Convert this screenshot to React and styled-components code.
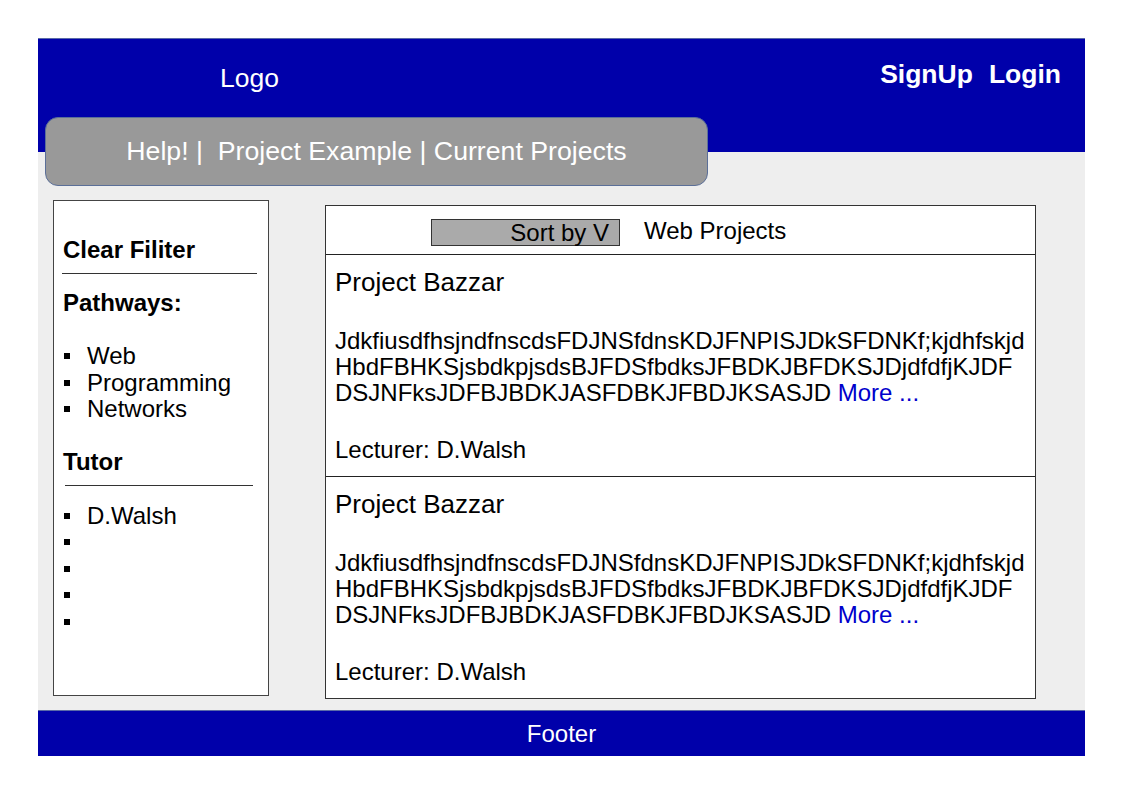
import React from "react";
import styled, { createGlobalStyle } from "styled-components";

const GlobalStyle = createGlobalStyle`
  html, body {
    margin: 0;
    padding: 0;
    background: #ffffff;
    font-family: "Liberation Sans", Arial, sans-serif;
    color: #000;
  }
  * { box-sizing: border-box; }
`;

const Frame = styled.div`
  width: 1047px;
  margin: 38px 0 0 38px;
  display: flex;
  flex-direction: column;
`;

const Header = styled.header`
  height: 114px;
  background: #0000aa;
  border-top: 1px solid #5a6aa8;
  display: flex;
  justify-content: space-between;
  align-items: flex-start;
  color: #fff;
`;

const Logo = styled.div`
  padding: 24px 0 0 182px;
  font-size: 26.5px;
  line-height: 30px;
`;

const AuthLinks = styled.nav`
  display: flex;
  gap: 16px;
  padding: 20px 24px 0 0;
  font-size: 26.5px;
  font-weight: bold;
  line-height: 30px;
`;

const AuthLink = styled.span``;

const Content = styled.main`
  height: 558px;
  background: #eeeeee;
  display: flex;
  flex-direction: column;
`;

const NavPill = styled.nav`
  margin: -35px 0 0 7px;
  width: 663px;
  height: 69px;
  background: #999999;
  border: 1px solid #5b6f98;
  border-radius: 13px;
  display: flex;
  align-items: center;
  justify-content: center;
  color: #fff;
  font-size: 26.7px;
  white-space: pre;
`;

const Columns = styled.div`
  display: flex;
  align-items: flex-start;
  padding-left: 15px;
  margin-top: 14px;
`;

const Sidebar = styled.aside`
  width: 216px;
  height: 496px;
  background: #fff;
  border: 1px solid #444;
  padding: 34px 0 0 9px;
`;

const SideHeading = styled.div`
  font-size: 24px;
  font-weight: bold;
  line-height: 30px;
  margin-top: ${(p) => p.$top || 0}px;
`;

const Rule = styled.div`
  height: 1px;
  background: #333;
  margin: ${(p) => p.$margin};
`;

const BulletList = styled.ul`
  list-style: none;
  margin: ${(p) => p.$top}px 0 0 0;
  padding: 0;
`;

const BulletItem = styled.li`
  display: flex;
  align-items: center;
  height: ${(p) => p.$h || 26.5}px;
  font-size: 24px;
  &::before {
    content: "";
    width: 6px;
    height: 6px;
    background: #000;
    margin: 0 17px 0 1px;
    flex: none;
  }
`;

const MainPanel = styled.section`
  margin: 5px 0 0 56px;
  width: 711px;
  height: 494px;
  background: #fff;
  border: 1px solid #333;
  display: flex;
  flex-direction: column;
`;

const PanelHeader = styled.div`
  height: 49px;
  border-bottom: 1px solid #222;
  display: flex;
  align-items: flex-start;
  padding: 13px 0 0 105px;
`;

const SortButton = styled.div`
  width: 189px;
  height: 27px;
  background: #aaaaaa;
  border: 1px solid #333;
  font-size: 24px;
  line-height: 25px;
  text-align: right;
  padding-right: 10px;
`;

const PanelTitle = styled.div`
  margin-left: 24px;
  font-size: 24px;
  line-height: 24px;
`;

const Card = styled.article`
  height: ${(p) => p.$h}px;
  padding: 12px 0 0 9px;
  border-bottom: ${(p) => (p.$last ? "none" : "1px solid #222")};
`;

const CardTitle = styled.div`
  font-size: 26px;
  line-height: 30px;
`;

const CardBody = styled.p`
  margin: 31px 0 0 0;
  font-size: 24px;
  line-height: 26px;
`;

const MoreLink = styled.span`
  color: #0000cc;
`;

const Lecturer = styled.div`
  margin-top: 31px;
  font-size: 24px;
  line-height: 26px;
`;

const Footer = styled.footer`
  height: 46px;
  background: #0000aa;
  border-top: 1px solid #5a6aa8;
  color: #fff;
  font-size: 24px;
  display: flex;
  align-items: center;
  justify-content: center;
`;

const projects = [
  { title: "Project Bazzar", lecturer: "D.Walsh" },
  { title: "Project Bazzar", lecturer: "D.Walsh" },
];

const body = [
  "JdkfiusdfhsjndfnscdsFDJNSfdnsKDJFNPISJDkSFDNKf;kjdhfskjd",
  "HbdFBHKSjsbdkpjsdsBJFDSfbdksJFBDKJBFDKSJDjdfdfjKJDF",
  "DSJNFksJDFBJBDKJASFDBKJFBDJKSASJD",
];

export default function App() {
  return (
    <>
      <GlobalStyle />
      <Frame>
        <Header>
          <Logo>Logo</Logo>
          <AuthLinks>
            <AuthLink>SignUp</AuthLink>
            <AuthLink>Login</AuthLink>
          </AuthLinks>
        </Header>
        <Content>
          <NavPill>{"Help! |  Project Example | Current Projects"}</NavPill>
          <Columns>
            <Sidebar>
              <SideHeading>Clear Filiter</SideHeading>
              <Rule $margin="8px 11px 0 -1px" />
              <SideHeading $top={14}>Pathways:</SideHeading>
              <BulletList $top={25}>
                <BulletItem>Web</BulletItem>
                <BulletItem>Programming</BulletItem>
                <BulletItem>Networks</BulletItem>
              </BulletList>
              <SideHeading $top={24}>Tutor</SideHeading>
              <Rule $margin="8px 15px 0 2px" />
              <BulletList $top={17}>
                <BulletItem>D.Walsh</BulletItem>
                <BulletItem>{"\u00a0"}</BulletItem>
                <BulletItem>{"\u00a0"}</BulletItem>
                <BulletItem>{"\u00a0"}</BulletItem>
                <BulletItem>{"\u00a0"}</BulletItem>
              </BulletList>
            </Sidebar>
            <MainPanel>
              <PanelHeader>
                <SortButton>Sort by V</SortButton>
                <PanelTitle>Web Projects</PanelTitle>
              </PanelHeader>
              {projects.map((p, i) => (
                <Card key={i} $h={i === 0 ? 223 : 221} $last={i === projects.length - 1}>
                  <CardTitle>{p.title}</CardTitle>
                  <CardBody>
                    {body[0]}
                    <br />
                    {body[1]}
                    <br />
                    {body[2]} <MoreLink>More ...</MoreLink>
                  </CardBody>
                  <Lecturer>Lecturer: {p.lecturer}</Lecturer>
                </Card>
              ))}
            </MainPanel>
          </Columns>
        </Content>
        <Footer>Footer</Footer>
      </Frame>
    </>
  );
}
